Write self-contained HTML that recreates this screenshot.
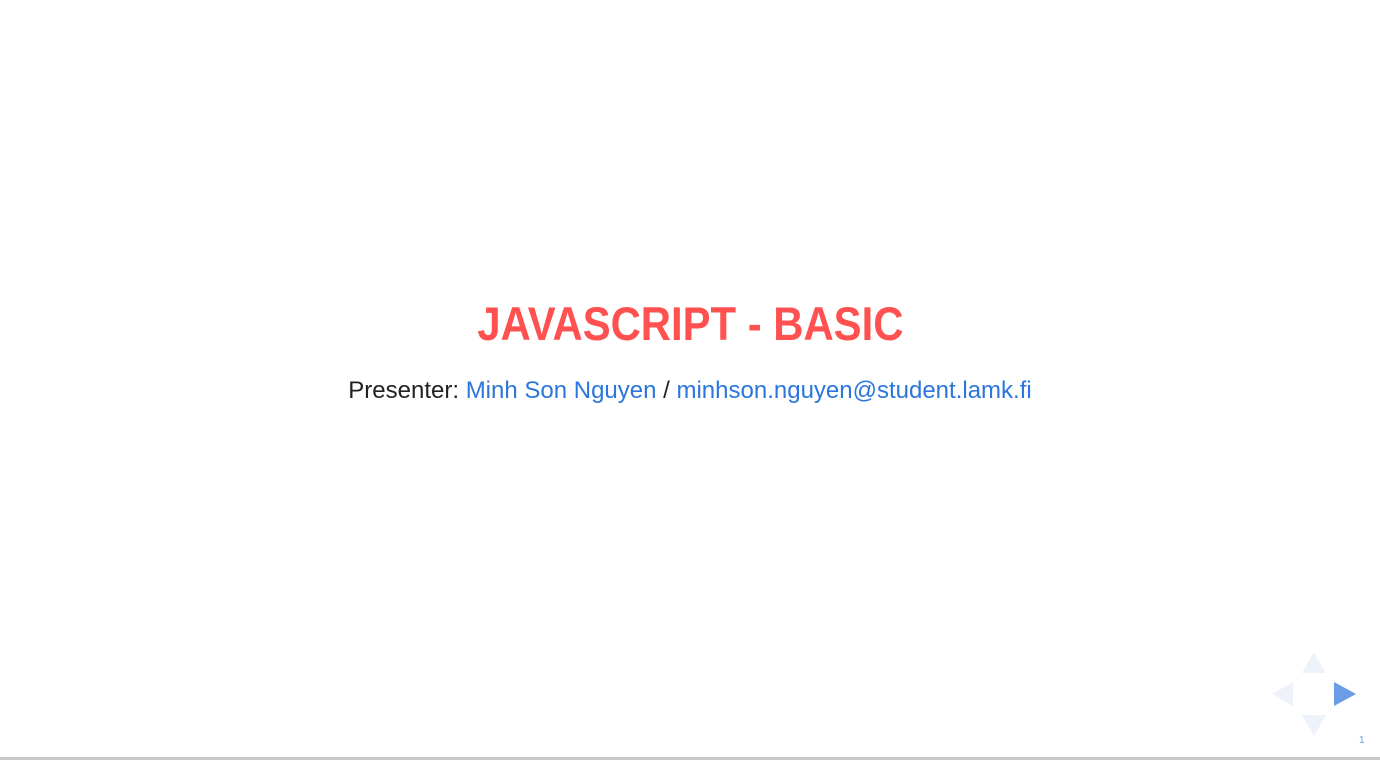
<!DOCTYPE html>
<html><head><style>
html,body{margin:0;padding:0;width:1380px;height:760px;background:#fff;overflow:hidden;position:relative;font-family:"Liberation Sans",sans-serif}
.t{position:absolute;left:0;width:1380px;text-align:center;white-space:nowrap}
.t span{display:inline-block}
#h{top:296px;font-size:47px;font-weight:bold;color:#ff5150;line-height:56px}
#h span{transform:scaleX(0.89)}
#s{top:376px;font-size:24px;color:#222;line-height:30px}
#s span{transform:scaleX(1.0)}
a{color:#2a76dd;text-decoration:none}
.bar{position:absolute;left:0;bottom:0;width:1380px;height:3px;background:#c8c8c8}
</style></head><body>
<div class="t" id="h"><span>JAVASCRIPT - BASIC</span></div>
<div class="t" id="s"><span>Presenter: <a>Minh Son Nguyen</a> / <a>minhson.nguyen@student.lamk.fi</a></span></div>
<svg style="position:absolute;left:1260px;top:640px" width="120" height="120">
<polygon points="54,12 66,33 42,33" fill="#eef3fb"/>
<polygon points="54,96 66,75 42,75" fill="#eef3fb"/>
<polygon points="12,54 33,42 33,66" fill="#eef3fb"/>
<polygon points="96,54 74,42 74,66" fill="#6a9de6"/>
<text x="99" y="103" font-size="10" fill="#6a9de6" font-family="Liberation Sans">1</text>
</svg>
<div class="bar"></div>
</body></html>
